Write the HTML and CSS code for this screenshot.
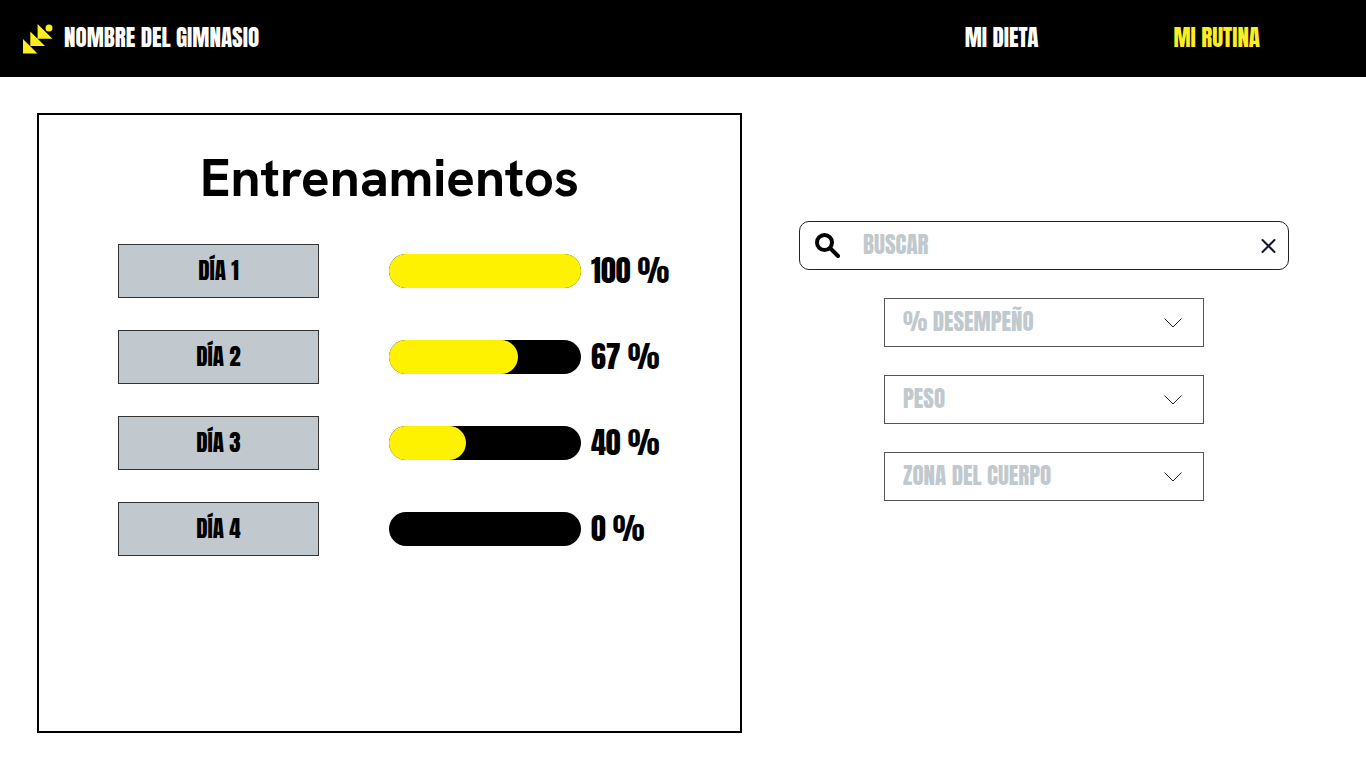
FILE: index.html
```html
<!DOCTYPE html>
<html lang="es">
<head>
<meta charset="utf-8">
<meta name="viewport" content="width=device-width, initial-scale=1">
<title>Mi rutina</title>
<link rel="stylesheet" href="styles.css">
</head>
<body>
<header class="topbar">
  <a class="brand" href="#">
    <svg class="logo" viewBox="0 0 30 30" aria-hidden="true">
      <path d="M0 15L14.500 29.500H0ZM7.300 7.500L22 22H7.300ZM14.600 0L29.500 14.700H14.600Z"/>
      <circle cx="26" cy="4" r="3.500"/>
    </svg>
    <span class="brand-name">NOMBRE DEL GIMNASIO</span>
  </a>
  <nav class="menu">
    <a class="menu-link" href="#">MI DIETA</a>
    <a class="menu-link active" href="#" aria-current="page">MI RUTINA</a>
  </nav>
</header>
<main class="page">
  <section class="panel">
    <h1 class="title">Entrenamientos</h1>
    <ul class="days">
      <li class="day">
        <button class="day-button" type="button">DÍA 1</button>
        <div class="track" role="progressbar" aria-label="Día 1" aria-valuenow="100"><div class="fill" style="width:100%"></div></div>
        <span class="percent">100 %</span>
      </li>
      <li class="day">
        <button class="day-button" type="button">DÍA 2</button>
        <div class="track" role="progressbar" aria-label="Día 2" aria-valuenow="67"><div class="fill" style="width:67%"></div></div>
        <span class="percent">67 %</span>
      </li>
      <li class="day">
        <button class="day-button" type="button">DÍA 3</button>
        <div class="track" role="progressbar" aria-label="Día 3" aria-valuenow="40"><div class="fill" style="width:40%"></div></div>
        <span class="percent">40 %</span>
      </li>
      <li class="day">
        <button class="day-button" type="button">DÍA 4</button>
        <div class="track" role="progressbar" aria-label="Día 4" aria-valuenow="0"><div class="fill" style="width:0%"></div></div>
        <span class="percent">0 %</span>
      </li>
    </ul>
  </section>
  <form class="filters">
    <div class="search">
      <svg class="search-icon" viewBox="0 0 26 26" aria-hidden="true"><circle cx="9.500" cy="9.500" r="7.500"/><path d="M15.500 15.500L23 23"/></svg>
      <input class="search-input" type="text" placeholder="BUSCAR" aria-label="Buscar">
      <button class="clear" type="reset" aria-label="Borrar"><svg class="clear-icon" viewBox="0 0 16 16" aria-hidden="true"><path d="M2.500 2L14.500 14M14.500 2L2.500 14"/></svg></button>
    </div>
    <div class="picker">
      <select class="select" aria-label="% Desempeño"><option>% DESEMPEÑO</option></select>
      <svg class="chevron" viewBox="0 0 18 10" aria-hidden="true"><path d="M0.500 0.500L9 9L17.500 0.500"/></svg>
    </div>
    <div class="picker">
      <select class="select" aria-label="Peso"><option>PESO</option></select>
      <svg class="chevron" viewBox="0 0 18 10" aria-hidden="true"><path d="M0.500 0.500L9 9L17.500 0.500"/></svg>
    </div>
    <div class="picker">
      <select class="select" aria-label="Zona del cuerpo"><option>ZONA DEL CUERPO</option></select>
      <svg class="chevron" viewBox="0 0 18 10" aria-hidden="true"><path d="M0.500 0.500L9 9L17.500 0.500"/></svg>
    </div>
  </form>
</main>
</body>
</html>
```
FILE: styles.css
```css
:root {
  --display: Anton, "Liberation Sans Narrow", "Roboto Condensed", "Liberation Sans", sans-serif;
  --gray: #c1c9ce;
}

* {
  box-sizing: border-box;
}

body {
  margin: 0;
  min-height: 100vh;
  display: flex;
  flex-direction: column;
  background: #fff;
  color: #000;
  font-family: var(--display);
  font-size: 23px;
  font-weight: 400;
  line-height: 34px;
}

.topbar {
  display: flex;
  align-items: center;
  justify-content: space-between;
  min-height: 77px;
  padding: 0 106px 0 23px;
  background: #000;
}

.brand {
  display: flex;
  align-items: center;
  gap: 11px;
  color: #fff;
  text-decoration: none;
}

.brand-name,
.menu-link {
  padding-bottom: 2px;
}

.logo {
  width: 30px;
  height: 30px;
  fill: #fcee21;
}

.menu {
  display: flex;
  gap: 135px;
}

.menu-link {
  color: #fff;
  text-decoration: none;
}

.menu-link.active {
  color: #fcee21;
}

.page {
  flex: 1;
  display: grid;
  grid-template-columns: 705fr 490fr;
  gap: 57px;
  padding: 36px 77px 35px 37px;
}

.panel {
  padding: 32px 40px;
  border: 2px solid #000;
}

.title {
  margin: 0;
  text-align: center;
  font-family: "HK Grotesk", "Hanken Grotesk", Inter, sans-serif;
  font-size: 53px;
  font-weight: 700;
  line-height: 62px;
}

.days {
  display: grid;
  gap: 32px;
  margin: 35px 0 0;
  padding: 0 0 0 39px;
  list-style: none;
}

.day {
  display: flex;
  align-items: center;
}

.day-button {
  width: 201px;
  height: 54px;
  margin-right: 70px;
  padding: 0;
  border: 1px solid #333;
  background: var(--gray);
  color: #000;
  font: inherit;
}

.track {
  width: 192px;
  height: 34px;
  margin-right: 10px;
  border-radius: 17px;
  background: #000;
}

.fill {
  height: 100%;
  border-radius: 17px;
  background: #fff200;
}

.percent {
  font-size: 30px;
  white-space: nowrap;
}

.filters {
  display: flex;
  flex-direction: column;
  align-items: center;
  gap: 28px;
  padding-top: 108px;
}

.search {
  display: flex;
  align-items: center;
  width: 100%;
  height: 49px;
  padding: 0 12px 0 15px;
  border: 1px solid #222;
  border-radius: 10px;
}

.search-icon {
  flex: none;
  width: 26px;
  height: 26px;
  fill: none;
  stroke: #000;
  stroke-width: 4;
  stroke-linecap: round;
}

.search-input {
  flex: 1;
  min-width: 0;
  padding: 0 22px 2px;
  border: 0;
  background: none;
  color: #000;
  font: inherit;
}

.search-input::placeholder {
  color: var(--gray);
  opacity: 1;
}

.clear {
  display: flex;
  padding: 0;
  border: 0;
  background: none;
}

.clear-icon {
  width: 16px;
  height: 16px;
  stroke: #14142b;
  stroke-width: 2;
  stroke-linecap: round;
}

.picker {
  position: relative;
  width: 320px;
}

.select {
  display: block;
  width: 100%;
  height: 49px;
  padding: 0 50px 2px 18px;
  appearance: none;
  border: 1px solid #555;
  border-radius: 0;
  background: #fff;
  color: var(--gray);
  font: inherit;
}

.chevron {
  position: absolute;
  top: 20px;
  right: 22px;
  width: 18px;
  height: 10px;
  fill: none;
  stroke: #222;
  pointer-events: none;
}
```
